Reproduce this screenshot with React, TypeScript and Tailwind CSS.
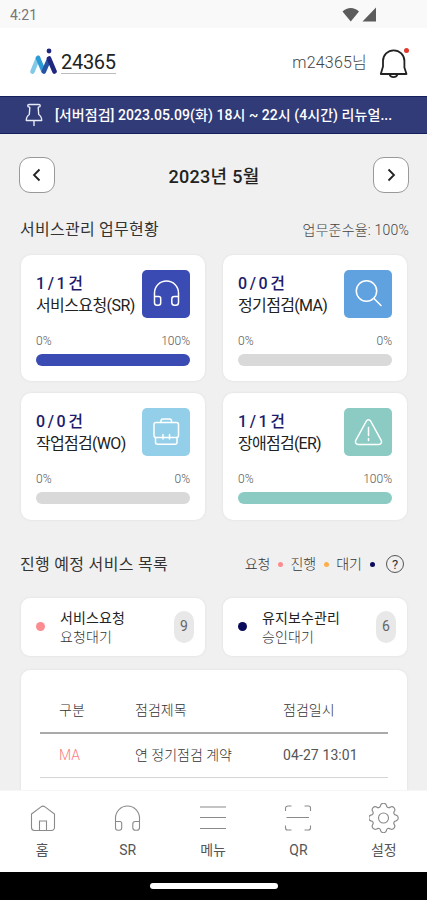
import { ReactNode } from "react";
import clsx from "clsx";

interface IServiceCard {
  count: string;
  title: string;
  percent: number;
  titleClass: string;
  iconClass: string;
  barClass: string;
  icon: ReactNode;
}

const HeadphonesPath = () => (
  <path d="M2.5 18.5V14a12 12 0 0 1 24 0v4.500M2.500 17.500h4.200a2 2 0 0 1 2 2v4.200a2.500 2.500 0 0 1-2.500 2.500h-1.200a2.500 2.500 0 0 1-2.500-2.500zM26.500 17.500h-4.200a2.500 2.500 0 0 0-2.500 2.500v3.400a2.800 2.800 0 0 0 2.800 2.800h1.100a2.800 2.800 0 0 0 2.800-2.800z" />
);

const services: IServiceCard[] = [
  {
    count: "1 / 1 건",
    title: "서비스요청(SR)",
    percent: 100,
    titleClass: "tracking-[-0.6px]",
    iconClass: "bg-[#3a4bb3]",
    barClass: "bg-[#3a4bb3]",
    icon: <HeadphonesPath />,
  },
  {
    count: "0 / 0 건",
    title: "정기점검(MA)",
    percent: 0,
    titleClass: "tracking-[-0.65px]",
    iconClass: "bg-[#5fa2df]",
    barClass: "bg-[#5fa2df]",
    icon: (
      <>
        <circle cx="12.500" cy="12" r="10.200" />
        <path d="m20 19.500 7 7" />
      </>
    ),
  },
  {
    count: "0 / 0 건",
    title: "작업점검(WO)",
    percent: 0,
    titleClass: "tracking-[-0.7px]",
    iconClass: "bg-[#93cfe8]",
    barClass: "bg-[#93cfe8]",
    icon: (
      <>
        <rect x="2" y="4.500" width="24.500" height="15" rx="2" />
        <path d="M9 4.500V3a2 2 0 0 1 2-2h6.500a2 2 0 0 1 2 2v1.500M3.500 19.500v4.800a2 2 0 0 0 2 2h17.500a2 2 0 0 0 2-2v-4.800M11 16.500v4.500M17.500 16.500v4.500" />
      </>
    ),
  },
  {
    count: "1 / 1 건",
    title: "장애점검(ER)",
    percent: 100,
    titleClass: "tracking-[-0.75px]",
    iconClass: "bg-[#8bcbc3]",
    barClass: "bg-[#8bcbc3]",
    icon: (
      <>
        <path d="M12.400 3 1.800 22.300a2.800 2.800 0 0 0 2.400 4.200h20.600a2.800 2.800 0 0 0 2.400-4.200L16.600 3a2.400 2.400 0 0 0-4.200 0z" />
        <path d="M14.500 9.500v8M14.500 20.500v2" />
      </>
    ),
  },
];

const waiting = [
  { title: "서비스요청", state: "요청대기", count: 9, dot: "bg-[#fb8c8f]" },
  { title: "유지보수관리", state: "승인대기", count: 6, dot: "bg-[#0b0b5c]" },
];

const legend = [
  { label: "요청", dot: "bg-[#fb8c8f]" },
  { label: "진행", dot: "bg-[#fbb04c]" },
  { label: "대기", dot: "bg-[#0b0b5c]" },
];

const tabs = [
  {
    label: "홈",
    icon: (
      <path d="M3.500 11 13 3.900a3.300 3.300 0 0 1 4 0L26.500 11V24.500a3 3 0 0 1-3 3h-17a3 3 0 0 1-3-3zM11.500 27.500V18h7v9.500" />
    ),
  },
  {
    label: "SR",
    icon: (
      <g transform="translate(0 1)">
        <HeadphonesPath />
      </g>
    ),
  },
  { label: "메뉴", icon: <path d="M1 4h26M1 14.500h26M1 25.500h26" /> },
  {
    label: "QR",
    icon: (
      <path d="M1.500 8V5.500a2.500 2.500 0 0 1 2.500-2.500h3.500M20.500 3H24.500a2 2 0 0 1 2 2v3M1.500 22.500V25a2 2 0 0 0 2 2h4M26.500 22.500V25a2 2 0 0 1-2 2h-4M2.500 14.500h22.500" />
    ),
  },
  {
    label: "설정",
    icon: (
      <>
        <circle cx="14.500" cy="15" r="5" />
        <path
          transform="translate(-1.700 -1.200) scale(1.080)"
          d="M12.300 3.300a2.850 2.850 0 0 1 5.400 0a2.150 2.150 0 0 0 3.660 1.520a2.850 2.850 0 0 1 3.820 3.820a2.150 2.150 0 0 0 1.520 3.660a2.850 2.850 0 0 1 0 5.400a2.150 2.150 0 0 0-1.520 3.660a2.850 2.850 0 0 1-3.820 3.820a2.150 2.150 0 0 0-3.660 1.520a2.850 2.850 0 0 1-5.400 0a2.150 2.150 0 0 0-3.660-1.520a2.850 2.850 0 0 1-3.820-3.820a2.150 2.150 0 0 0-1.520-3.660a2.850 2.850 0 0 1 0-5.400a2.150 2.150 0 0 0 1.520-3.660a2.850 2.850 0 0 1 3.820-3.820a2.150 2.150 0 0 0 3.660-1.520z"
        />
      </>
    ),
  },
];

const StatusBar = () => (
  <div className="flex h-7 shrink-0 items-center justify-between bg-[#f9f9f9] pr-[50px] pl-2.5 text-[#777]">
    <span className="pt-0.5 text-[14px] leading-5">4:21</span>
    <svg width="35" height="15" viewBox="0 0 35 15" fill="#5c5c5c">
      <path d="M0.500 4.500C5 -0.300 12.500 -0.300 17 4.500L8.750 14.500z" />
      <path d="M34 0.500v14H20.500z" />
    </svg>
  </div>
);

const Header = () => (
  <header className="flex h-17 shrink-0 items-center justify-between bg-white pr-[19px] pl-[29px]">
    <div className="flex items-center gap-1">
      <svg width="28" height="28" viewBox="0 0 28 28" fill="none" strokeLinecap="round" strokeWidth="4.600">
        <path d="M3.500 23.500 9 10" stroke="#83c9e8" />
        <path d="m9 10 5.500 13" stroke="#2b9bd6" />
        <path d="m14.800 23.500 5-11.500" stroke="#2753a5" />
        <path d="m20 10.500 5.500 13" stroke="#20277f" />
        <circle cx="20" cy="3" r="2.400" fill="#20277f" />
      </svg>
      <div className="flex w-[55px] flex-col border-b border-[#bbb] pt-0.5">
        <span className="text-[20px] leading-[21px] tracking-[-0.3px] text-[#222]">24365</span>
      </div>
    </div>
    <div className="flex items-center gap-3">
      <span className="pt-0.5 text-[16px] leading-6 font-light tracking-[0.2px] text-[#444]">m24365님</span>
      <div className="relative pt-1">
        <svg width="29" height="32" viewBox="1.500 0 29 32" fill="none" stroke="#222" strokeWidth="1.800" strokeLinejoin="round">
          <path d="M5.500 18.500V13a10.700 10.700 0 0 1 21.400 0v6.500L29 26H3.300z" />
          <path d="M12 26.500a4.300 4.300 0 0 0 8 0" />
        </svg>
        <span className="absolute top-1 -right-px size-[5px] rounded-full bg-[#e03a2e]" />
      </div>
    </div>
  </header>
);

const Notice = () => (
  <div className="flex h-[38px] shrink-0 items-center gap-3 border-y border-[#17205f] bg-[#303b77] pl-[25px] text-white">
    <svg width="18" height="24" viewBox="0 0 18 24" fill="none" stroke="#e8eaf5" strokeWidth="1.400" strokeLinejoin="round">
      <path d="M4 1.500h10a1.200 1.200 0 0 1 0 2.400l-.8.600.5 7c1.700 1 3 3 3 6H1.300c0-3 1.300-5 3-6l.5-7-.8-.600a1.200 1.200 0 0 1 0-2.400zM9 17.500V23" />
    </svg>
    <p className="text-[14px] leading-5 font-medium tracking-[0.06px] whitespace-nowrap">
      [서버점검] 2023.05.09(화) 18시 ~ 22시 (4시간) 리뉴얼...
    </p>
  </div>
);

const MonthButton = ({ d }: { d: string }) => (
  <button className="flex size-9 items-center justify-center rounded-[11px] border border-[#999] bg-white">
    <svg width="16" height="16" viewBox="0 0 16 16" fill="none" stroke="#222" strokeWidth="1.800">
      <path d={d} />
    </svg>
  </button>
);

const ServiceCard = ({ service }: { service: IServiceCard }) => (
  <div className="h-[126.500px] rounded-[10px] bg-white px-[15px] pt-[15px] shadow-[0_0_3px_rgba(0,0,0,0.08)]">
    <div className="flex justify-between">
      <div className="pt-[3px] whitespace-nowrap">
        <p className="text-[16px] leading-[22px] font-medium tracking-[-0.7px] text-[#1c1c6b]">{service.count}</p>
        <p className={clsx("w-24 text-[16px] leading-[22px] text-[#222]", service.titleClass)}>
          {service.title}
        </p>
      </div>
      <div className={clsx("flex size-12 shrink-0 items-center justify-center rounded-[5px]", service.iconClass)}>
        <svg width="29" height="29" viewBox="0 0 29 29" fill="none" stroke="#fff" strokeWidth="1.500" strokeLinecap="round" strokeLinejoin="round">
          {service.icon}
        </svg>
      </div>
    </div>
    <div className="mt-3.5 flex justify-between text-[12px] leading-[18px] font-light text-[#555]">
      <span>0%</span>
      <span>{service.percent}%</span>
    </div>
    <div className="mt-1 h-3 overflow-hidden rounded-full bg-[#d9d9d9]">
      <div className={clsx("h-full", service.barClass)} style={{ width: `${service.percent}%` }} />
    </div>
  </div>
);

const App = () => {
  return (
    <div className="flex h-[900px] w-[427px] flex-col overflow-hidden bg-[#f0f0f0] font-[Roboto,'Noto_Sans_CJK_KR',sans-serif]">
      <StatusBar />
      <Header />
      <Notice />

      <main className="flex min-h-0 flex-1 flex-col overflow-hidden px-[19px] pt-[23px]">
        <div className="-mr-px flex shrink-0 items-center justify-between">
          <MonthButton d="M10.500 2.500 5 8l5.500 5.500" />
          <h1 className="pt-[3px] text-[18px] leading-6 font-medium tracking-[0.3px] text-[#222]">2023년 5월</h1>
          <MonthButton d="M5.500 2.500 11 8l-5.500 5.500" />
        </div>

        <div className="mt-[25px] -mr-px flex h-6 shrink-0 items-center justify-between pl-px">
          <h2 className="text-[16px] tracking-[0.25px] text-[#333]">서비스관리 업무현황</h2>
          <span className="pt-px text-[14px] font-light tracking-[0.2px] text-[#444]">업무준수율: 100%</span>
        </div>

        <div className="mt-[12.500px] grid shrink-0 grid-cols-2 gap-x-[18px] gap-y-3 pr-px pl-0.5">
          {services.map((service) => (
            <ServiceCard key={service.title} service={service} />
          ))}
        </div>

        <div className="mt-8 flex h-6 shrink-0 items-center justify-between pr-1 pl-px">
          <h2 className="pt-0.5 text-[16px] tracking-[0.3px] text-[#333]">진행 예정 서비스 목록</h2>
          <div className="flex items-center gap-[7.500px] pt-px text-[14px] font-light text-[#333]">
            {legend.map((item) => (
              <div key={item.label} className="flex items-center gap-[7.500px]">
                <span>{item.label}</span>
                <span className={clsx("size-[5px] rounded-full", item.dot)} />
              </div>
            ))}
            <span className="ml-1 flex size-[18px] items-center justify-center rounded-full border-[1.500px] border-[#555] text-[13px] leading-none font-normal">
              ?
            </span>
          </div>
        </div>

        <div className="mt-[22px] grid shrink-0 grid-cols-2 gap-x-[18px] pr-px pl-0.5">
          {waiting.map((item) => (
            <div key={item.title} className="flex h-[58px] items-center rounded-[9px] bg-white pr-[11px] pl-[15px] shadow-[0_0_3px_rgba(0,0,0,0.08)]">
              <span className={clsx("size-[9px] rounded-full", item.dot)} />
              <div className="ml-[15px] flex-1 pt-0.5 text-[14px] leading-[19px] tracking-[0.1px]">
                <p className="text-[#222]">{item.title}</p>
                <p className="font-light text-[#333]">{item.state}</p>
              </div>
              <span className="flex h-8 w-5 items-center justify-center rounded-full bg-[#e8e8e8] text-[14px] text-[#666]">
                {item.count}
              </span>
            </div>
          ))}
        </div>

        <div className="mt-[14px] mr-px ml-0.5 h-40 shrink-0 rounded-[9px] bg-white px-[19px] pt-5 shadow-[0_0_3px_rgba(0,0,0,0.08)]">
          <div className="grid h-11 grid-cols-[76px_148px_1fr] items-center border-b-2 border-[#aaa] pl-[19px] text-[14px] font-light text-[#333]">
            <span>구분</span>
            <span>점검제목</span>
            <span>점검일시</span>
          </div>
          <div className="grid h-11 grid-cols-[76px_148px_1fr] items-center border-b border-[#d5d5d5] pt-px pl-[19px] text-[14px] font-light text-[#333]">
            <span className="text-[#fb7d80]">MA</span>
            <span>연 정기점검 계약</span>
            <span className="font-normal tracking-[0.1px] text-[#555]">04-27 13:01</span>
          </div>
        </div>
      </main>

      <nav className="flex h-[82px] shrink-0 border-t border-[#f6f6f6] bg-white">
        {tabs.map((tab) => (
          <div key={tab.label} className="flex flex-1 flex-col items-center pt-3">
            <svg width="30" height="30" viewBox="0 0 30 30" fill="none" stroke="#8a8a8a" strokeWidth="1.100">
              {tab.icon}
            </svg>
            <span className="mt-[7px] pr-px text-[14px] leading-5 text-[#555]">{tab.label}</span>
          </div>
        ))}
      </nav>
      <div className="flex h-7 shrink-0 items-center justify-center bg-black">
        <div className="h-1.5 w-32 rounded-full bg-white" />
      </div>
    </div>
  );
};

export default App;
